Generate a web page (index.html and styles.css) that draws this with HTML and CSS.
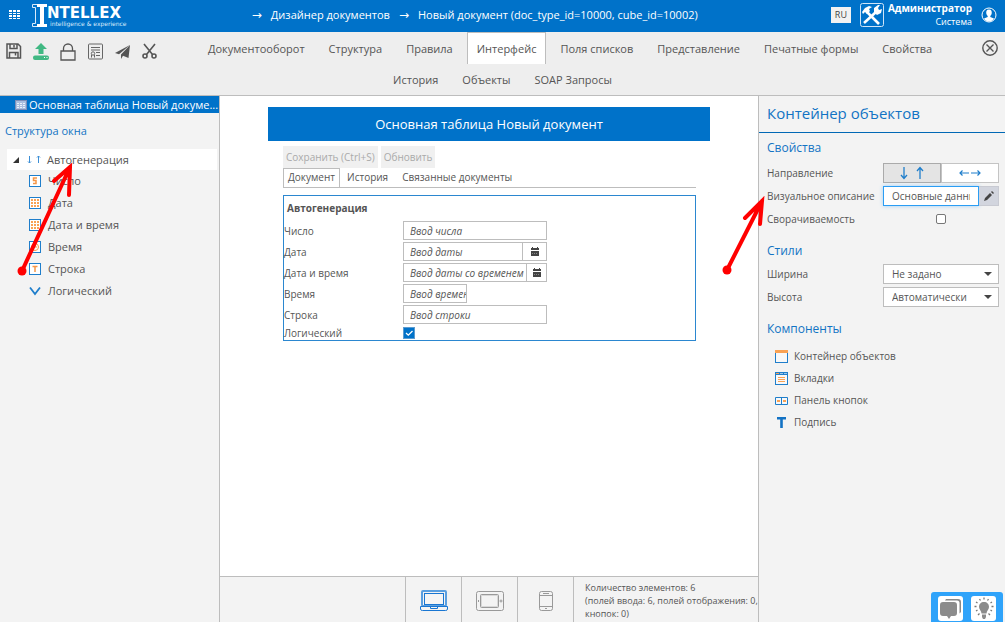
FILE: index.html
```html
<!DOCTYPE html>
<html lang="ru">
<head>
<meta charset="utf-8">
<title>Intellex — Дизайнер документов</title>
<link rel="stylesheet" href="styles.css">
</head>
<body>
<header class="topbar">
  <button class="icon-btn apps" aria-label="Меню">
    <svg width="12" height="10" viewBox="0 0 12 10" fill="#fff"><path d="M0 0h3v2H0zM4 0h3v2H4zM8 0h3v2H8zM0 3h3v1H0zM4 3h3v1H4zM8 3h3v1H8zM0 5h3v2H0zM4 5h3v2H4zM8 5h3v2H8zM0 8h3v1H0zM4 8h3v1H4zM8 8h3v1H8z"/></svg>
  </button>
  <div class="brand">
    <svg class="brand-mark" width="15" height="25" viewBox="0 0 15 25"><path d="M5 1h10v3h-3v17h3v3H5v-3h3V4H5z" fill="#fff"/><path d="M5 1.500H.5v3h3v16h-3v3H5" fill="none" stroke="#d9eafa"/></svg>
    <div class="brand-text"><span class="brand-name">NTELLEX</span><span class="brand-tag">intelligence &amp; experience</span></div>
  </div>
  <div class="crumbs"><span class="arrow">→</span><a href="#">Дизайнер документов</a><span class="arrow">→</span><a href="#">Новый документ (doc_type_id=10000, cube_id=10002)</a></div>
  <button class="lang">RU</button>
  <button class="icon-btn" aria-label="Настройки">
    <svg width="24" height="24" viewBox="0 0 24 24"><rect x=".5" y=".5" width="23" height="23" rx="2" fill="none" stroke="#cfe4f7"/><path d="M7 9l12 12" stroke="#fff" stroke-width="2.600"/><path d="M2 9l3-4 4-2 3 1-3 2 1 2-3 3-2-2-2 2z" fill="#fff"/><path d="M4 20L16 9" stroke="#fff" stroke-width="2.600"/><path d="M14 9V5l4-3h2l-2 3 1 2 3-1-1 4-4 2z" fill="#fff"/></svg>
  </button>
  <div class="user"><b>Администратор</b><span>Система</span></div>
  <button class="icon-btn" aria-label="Профиль">
    <svg width="16" height="16" viewBox="0 0 16 16"><circle cx="8" cy="8" r="7" fill="none" stroke="#fff"/><path d="M8 2.500c-2.500 0-3 2-2.700 4 .2 1.300.9 2 1.400 2.500v1L3 11.500c1 2 3 3 5 3s4-1 5-3L9.300 10V9c.5-.5 1.200-1.200 1.400-2.500.3-2-.2-4-2.700-4z" fill="#fff"/></svg>
  </button>
</header>

<nav class="nav">
  <div class="nav-row">
    <div class="tools">
      <button class="icon-btn" aria-label="Сохранить"><svg width="18" height="18" viewBox="0 0 18 18" fill="none" stroke="#555" stroke-width="1.500"><path d="M2 1h11l2.500 2.500V15H2zM5 1v4.500h7V1M4.500 15V9.500H13V15M9 2v2.500M10.500 10v2.500"/></svg></button>
      <button class="icon-btn" aria-label="Опубликовать"><svg width="18" height="18" viewBox="0 0 18 18"><path d="M9 0l6 6h-3.500v5h-5V6H3z" fill="#41b883"/><rect x="1" y="12.500" width="16" height="4.500" rx="2" fill="#41b883"/><path d="M12 14.500h1M14.500 14.500h1" stroke="#fff"/></svg></button>
      <button class="icon-btn" aria-label="Заблокировать"><svg width="18" height="18" viewBox="0 0 18 18" fill="none" stroke="#555" stroke-width="1.300"><path d="M2 8h14v9H2zM4.500 8V5.500a4.500 4.500 0 0 1 9 0V8"/></svg></button>
      <button class="icon-btn" aria-label="Сертификат"><svg width="18" height="18" viewBox="0 0 18 18" fill="none" stroke="#666"><rect x="2.500" y="1" width="14" height="15" rx="1"/><path d="M5 4.500h9M5 7h9M10 9.500h4M10 12.500h4"/><circle cx="7" cy="10.500" r="1.700"/><path d="M5.500 12v2.500M8.500 12v2.500"/></svg></button>
      <button class="icon-btn" aria-label="Отправить"><svg width="18" height="18" viewBox="0 0 18 18"><path d="M17 2L2 10l4 1.200z" fill="#555"/><path d="M17 2L8 11.500V16l2-3.300 5.500 2.300z" fill="#555"/></svg></button>
      <button class="icon-btn" aria-label="Вырезать"><svg width="18" height="18" viewBox="0 0 18 18" fill="none" stroke="#555" stroke-width="1.600"><path d="M4 1l8.500 10.500M15 1L6.500 11.500"/><circle cx="5" cy="13" r="2"/><circle cx="14" cy="13" r="2"/></svg></button>
    </div>
    <div class="tabs grow">
      <a class="tab" href="#">Документооборот</a><a class="tab" href="#">Структура</a><a class="tab" href="#">Правила</a><a class="tab active" href="#">Интерфейс</a><a class="tab" href="#">Поля списков</a><a class="tab" href="#">Представление</a><a class="tab" href="#">Печатные формы</a><a class="tab" href="#">Свойства</a>
    </div>
    <button class="icon-btn close" aria-label="Закрыть"><svg width="16" height="16" viewBox="0 0 16 16" fill="none" stroke="#555" stroke-width="1.400"><circle cx="8" cy="8" r="7.200"/><path d="M4.500 4.500l7 7M11.500 4.500l-7 7"/></svg></button>
  </div>
  <div class="tabs second">
    <a class="tab" href="#">История</a><a class="tab" href="#">Объекты</a><a class="tab" href="#">SOAP Запросы</a>
  </div>
</nav>

<div class="workspace">
  <aside class="left">
    <div class="doc-title">
      <svg width="12" height="10" viewBox="0 0 12 10"><rect x=".5" y=".5" width="11" height="9" fill="#a9bfe0" stroke="#7d8fb8"/><path d="M2 3.500h8M2 5.500h8M2 7.500h8" stroke="#eaf2fb" stroke-dasharray="2 1"/></svg>
      <span>Основная таблица Новый докуме...</span>
    </div>
    <h2 class="section">Структура окна</h2>
    <ul class="tree">
      <li class="root"><svg width="6" height="6"><path d="M6 0v6H0z" fill="#333"/></svg><svg width="18" height="10" viewBox="0 0 18 10" fill="none" stroke="#3b8ed6"><path d="M5.500 1v7M4 6.500L5.500 8 7 6.500M14.500 8V1M13 2.500L14.500 1 16 2.500"/></svg><span>Автогенерация</span></li>
      <li><svg width="12" height="12" viewBox="0 0 12 12"><rect x=".5" y=".5" width="11" height="11" fill="#fff" stroke="#1f7ecb"/><path d="M8 3H4.500v2.500h2.500V8.500H4" fill="none" stroke="#f79646" stroke-width="1.500"/></svg><span>Число</span></li>
      <li><svg width="12" height="12" viewBox="0 0 12 12"><rect x=".5" y=".5" width="11" height="11" fill="#fff" stroke="#1f7ecb"/><path d="M2 3h8M2 6h8M2 9h8" stroke="#f9a254" stroke-width="2" stroke-dasharray="2 1"/></svg><span>Дата</span></li>
      <li><svg width="12" height="12" viewBox="0 0 12 12"><rect x=".5" y=".5" width="11" height="11" fill="#fff" stroke="#1f7ecb"/><path d="M2 3h8M2 6h8M2 9h8" stroke="#f9a254" stroke-width="2" stroke-dasharray="2 1"/></svg><span>Дата и время</span></li>
      <li><svg width="12" height="12" viewBox="0 0 12 12"><rect x=".5" y=".5" width="11" height="11" fill="#fff" stroke="#1f7ecb"/><circle cx="6" cy="6" r="3.500" fill="none" stroke="#f79646"/><path d="M6 4v2h2" fill="none" stroke="#f79646"/></svg><span>Время</span></li>
      <li><svg width="12" height="12" viewBox="0 0 12 12"><rect x=".5" y=".5" width="11" height="11" fill="#fff" stroke="#1f7ecb"/><path d="M3.500 3.500h5M6 3.500V9" fill="none" stroke="#f79646" stroke-width="1.500"/></svg><span>Строка</span></li>
      <li><svg width="12" height="12" viewBox="0 0 12 12" fill="none" stroke="#1f7ecb" stroke-width="1.800"><path d="M1 2.500L6 9l5-6.500"/></svg><span>Логический</span></li>
    </ul>
    <svg class="pointer pointer-left" width="60" height="114" viewBox="0 0 60 114"><path d="M6 108L54 4M38 18L54 4L53 32" /><circle cx="6" cy="108" r="4.500"/></svg>
  </aside>

  <main class="center">
    <div class="canvas">
      <h1 class="banner">Основная таблица Новый документ</h1>
      <div class="form-body">
        <div class="actions"><button disabled>Сохранить (Ctrl+S)</button><button disabled>Обновить</button></div>
        <div class="subtabs"><a class="active" href="#">Документ</a><a href="#">История</a><a href="#">Связанные документы</a></div>
        <section class="group">
          <h3>Автогенерация</h3>
          <div class="field"><label for="num">Число</label><input class="box" id="num" placeholder="Ввод числа"></div>
          <div class="field"><label for="date">Дата</label><div class="box combo"><input id="date" placeholder="Ввод даты"><button class="cal wide" aria-label="Календарь"><svg width="10" height="10" viewBox="0 0 10 10"><path d="M1 1h1V0h1v1h4V0h1v1h1v2H1zM1 4h8v5H1z" fill="#444"/><path d="M2 6.500h6" stroke="#888" stroke-dasharray="1 1"/></svg></button></div></div>
          <div class="field"><label for="dt">Дата и время</label><div class="box combo"><input id="dt" placeholder="Ввод даты со временем"><button class="cal" aria-label="Календарь"><svg width="10" height="10" viewBox="0 0 10 10"><path d="M1 1h1V0h1v1h4V0h1v1h1v2H1zM1 4h8v5H1z" fill="#444"/><path d="M2 6.500h6" stroke="#888" stroke-dasharray="1 1"/></svg></button></div></div>
          <div class="field"><label for="time">Время</label><input class="box short" id="time" placeholder="Ввод времени"></div>
          <div class="field"><label for="str">Строка</label><input class="box" id="str" placeholder="Ввод строки"></div>
          <div class="field last"><label for="bool">Логический</label><span class="check-blue"><input type="checkbox" id="bool" checked><svg width="12" height="12" viewBox="0 0 12 12" fill="none" stroke="#fff" stroke-width="1.300"><path d="M3 6l2.300 2.200L9.500 4"/></svg></span></div>
        </section>
      </div>
    </div>
    <footer class="devices">
      <button class="device" aria-label="Ноутбук"><svg width="28" height="22" viewBox="0 0 28 22" fill="none" stroke="#1976d2"><rect x="2" y="1" width="24" height="15" rx="1" stroke-width="2" stroke="#5a9fe0"/><rect x="4.500" y="3.500" width="19" height="11" fill="#f5f5f5"/><path d="M.5 16.500h27V19q0 1.500-2 1.500h-23q-2 0-2-1.500zM10.500 17v1.500h7V17"/></svg></button>
      <button class="device" aria-label="Планшет"><svg width="28" height="20" viewBox="0 0 28 20" fill="none" stroke="#999"><rect x=".5" y=".5" width="27" height="19" rx="2"/><rect x="4.500" y="3.500" width="18" height="13" rx="1"/><rect x="5.500" y="4.500" width="16" height="11" stroke="#d8d8d8"/><circle cx="25" cy="10" r="1"/><path d="M2.500 9v2"/></svg></button>
      <button class="device" aria-label="Телефон"><svg width="14" height="20" viewBox="0 0 14 20" fill="none" stroke="#999"><rect x=".5" y=".5" width="13" height="19" rx="2"/><path d="M1 4.500h12M1 15.500h12M4 2.500h6M6 17.500h2"/></svg></button>
      <p class="stats">Количество элементов: 6<br>(полей ввода: 6, полей отображения: 0,<br>кнопок: 0)</p>
    </footer>
  </main>

  <aside class="right">
    <h2 class="panel-title">Контейнер объектов</h2>
    <div class="props">
      <h3 class="section">Свойства</h3>
      <div class="prop"><span>Направление</span><div class="control toggle"><button class="on" aria-label="Вертикально"><svg width="24" height="14" viewBox="0 0 24 14" fill="none" stroke="#1f7ecb" stroke-width="1.300"><path d="M4 1v11.500M1 9l3 3.500L7 9M20 13V1.500M17 5l3-3.500L23 5"/></svg></button><button aria-label="Горизонтально"><svg width="22" height="6" viewBox="0 0 22 6" fill="none" stroke="#1f7ecb" stroke-width="1.200"><path d="M10 3H1M3.500.5L1 3l2.500 2.500M12 3h9M18.500.5L21 3l-2.500 2.500"/></svg></button></div></div>
      <div class="prop"><label for="desc">Визуальное описание</label><div class="control desc"><input id="desc" value="Основные данные"><button aria-label="Изменить"><svg width="10" height="10" viewBox="0 0 10 10" fill="#444"><path d="M0 10l1-3 5-5 2 2-5 5zM7 1l1-1 2 2-1 1z"/></svg></button></div></div>
      <div class="prop"><label for="fold">Сворачиваемость</label><div class="control centered"><input class="check-plain" type="checkbox" id="fold"></div></div>
      <h3 class="section spaced">Стили</h3>
      <div class="prop"><label for="w">Ширина</label><div class="control select"><select id="w"><option>Не задано</option></select></div></div>
      <div class="prop"><label for="h">Высота</label><div class="control select"><select id="h"><option>Автоматически</option></select></div></div>
      <h3 class="section spaced">Компоненты</h3>
      <ul class="components">
        <li><svg width="13" height="13" viewBox="0 0 13 13"><rect x=".5" y=".5" width="12" height="12" fill="#f8f8f8" stroke="#1f7ecb"/><path d="M0 0h13v3H0z" fill="#f9a254"/></svg>Контейнер объектов</li>
        <li><svg width="13" height="13" viewBox="0 0 13 13"><rect x=".5" y=".5" width="12" height="12" fill="#f8f8f8" stroke="#1f7ecb"/><path d="M0 0h13v3H0z" fill="#1f7ecb"/><path d="M1 1h3v1H1zM3 5h7v1H3zM3 7h7v1H3zM3 9h7v1H3z" fill="#f9a254"/><path d="M5 1h3v1H5zM9 1h3v1H9z" fill="#9cc6ea"/></svg>Вкладки</li>
        <li><svg width="13" height="13" viewBox="0 0 13 13"><path d="M.5 3.500h12v7H.5zM6.500 3.500v7" fill="#f8f8f8" stroke="#1f7ecb"/><path d="M2 6h3v2H2zM8 6h3v2H8z" fill="#f9a254"/></svg>Панель кнопок</li>
        <li><svg width="13" height="13" viewBox="0 0 13 13"><path d="M2 1h9v2.500H7.800V12H5.200V3.500H2z" fill="#1372c4"/></svg>Подпись</li>
      </ul>
    </div>
    <svg class="pointer pointer-right" width="46" height="80" viewBox="0 0 46 80"><path d="M6 74L41 5M24 22L41 5L39 28"/><circle cx="6" cy="74" r="4.500"/></svg>
  </aside>
</div>

<div class="helper">
  <button aria-label="Чат"><svg width="25" height="25" viewBox="0 0 25 25"><path d="M8 3h12q3 0 3 3v10l-1.500 1.500V7q0-2.500-2.500-2.500H7z" fill="#888"/><path d="M5 6h11q3 0 3 3v8q0 3-3 3h-3l-2 3-2-3H5q-3 0-3-3V9q0-3 3-3z" fill="#8c8c8c"/></svg></button>
  <button aria-label="Подсказка"><svg width="25" height="25" viewBox="0 0 25 25"><path d="M13 6c-3 0-5 2-5 5 0 2.500 2.500 4 2.500 6.500h5C15.500 15 18 13.500 18 11c0-3-2-5-5-5zM11 18.500h4V21l-1 2h-2l-1-2z" fill="#8c8c8c"/><path d="M13 1.500v2M8.500 3l1 1.500M17.500 3l-1 1.500M5 6l1.500 1M21 6l-1.500 1M3.500 10.500h2M20.500 10.500h2M5 15l1.500-1M21 15l-1.500-1M7 19l1.500-1.500M19 19l-1.500-1.500" stroke="#777" stroke-width="1.300"/></svg></button>
</div>
</body>
</html>
```
FILE: styles.css
```css
* { box-sizing: border-box; }

body {
  margin: 0;
  min-height: 100vh;
  display: flex;
  flex-direction: column;
  font: 10px/14px "Open Sans", sans-serif;
  color: #555;
  background: #fff;
}

button, input, select { font: inherit; color: inherit; margin: 0; border-radius: 0; }
button { padding: 0; border: 0; background: none; }
a { color: inherit; text-decoration: none; }
h1, h2, h3, p, ul { margin: 0; padding: 0; font-weight: 400; }
ul { list-style: none; }
svg { display: block; flex: none; }
.icon-btn { flex: none; }

/* Top bar */
.topbar {
  display: flex;
  align-items: center;
  height: 32px;
  padding: 0 8px 2px 9px;
  background: #0072c9;
  color: #fff;
}
.brand { display: flex; align-items: center; margin-left: 11px; }
.brand-text { display: flex; flex-direction: column; padding-top: 3px; }
.brand-name { font: bold 15px/14px "DejaVu Sans", sans-serif; }
.brand-tag { margin-left: 3px; font: 6px/8px "DejaVu Sans", sans-serif; color: #d9eafa; }
.crumbs { flex: 1; display: flex; justify-content: center; gap: 9px; padding-right: 8px; font-size: 11px; line-height: 16px; white-space: nowrap; }
.arrow { font-family: "DejaVu Sans", sans-serif; font-size: 12px; }
.lang { width: 20px; height: 16px; background: #f2f2f2; color: #444; font-size: 9px; }
.topbar .lang + .icon-btn { margin-left: 9px; }
.user { display: flex; flex-direction: column; align-items: flex-end; margin: 0 9px 0 4px; font-size: 9px; line-height: 13px; }
.user b { font-size: 10px; }

/* Navigation */
.nav { background: #eee; border-bottom: 1px solid #bdbdbd; font-size: 11px; line-height: 16px; }
.nav-row { display: flex; }
.tools { display: flex; gap: 9px; padding: 8px 0 0 5px; }
.tabs { display: flex; justify-content: center; gap: 4px; }
.grow { flex: 1; }
.tab { padding: 8px 9px 7px; border: 1px solid transparent; border-bottom: 0; white-space: nowrap; }
.tab.active { background: #fff; border-color: #bdbdbd; }
.second .tab { padding-top: 7px; }
.close { align-self: flex-start; padding: 8px 7px 0 0; }

/* Workspace */
.workspace { flex: 1; display: grid; grid-template-columns: 220px 1fr 247px; }
.left, .right { position: relative; background: #f3f3f3; }
.left { border-right: 1px solid #bdbdbd; }
.right { border-left: 1px solid #bdbdbd; }
.section { color: #1273c4; font-size: 12px; line-height: 16px; }

.doc-title { display: flex; align-items: center; gap: 2px; height: 17px; padding-left: 15px; background: #0072c9; color: #fff; font-size: 11px; white-space: nowrap; }
.left .section { padding: 10px 5px; font-size: 11px; }
.tree { padding: 0 2px 0 7px; font-size: 11px; }
.tree li { display: flex; align-items: center; gap: 7px; height: 22px; padding-left: 22px; }
.tree .root { gap: 5px; height: 21px; padding-left: 6px; background: #fff; }

.pointer { position: absolute; fill: none; stroke: #f00; stroke-width: 4; stroke-linecap: round; pointer-events: none; }
.pointer circle { fill: #f00; stroke: none; }
.pointer-left { left: 16px; top: 67px; }
.pointer-right { left: -38px; top: 100px; }

/* Form preview */
.center { display: flex; flex-direction: column; min-width: 0; }
.canvas { flex: 1; padding: 11px 48px; }
.banner { background: #0072c9; color: #fff; font-size: 13px; line-height: 34px; text-align: center; }
.form-body { padding: 5px 14px 0 15px; }
.actions { display: flex; gap: 3px; }
.actions button { height: 22px; padding: 0 3px; background: #f0f0f0; color: #aaa; }
.subtabs { display: flex; border-bottom: 1px solid #bdbdbd; }
.subtabs a { padding: 2px 7px 3px; }
.subtabs .active { padding: 1px 4px 3px; border: 1px solid #bdbdbd; border-bottom: 0; }
.group { margin-top: 7px; border: 1px solid #2b87d0; }
.group h3 { padding: 5px 3px 6px; font-size: 10px; font-weight: 700; line-height: 14px; }
.field { display: flex; align-items: center; margin-bottom: 2px; }
.field label { flex: none; width: 119px; }
.field.last { margin-bottom: 0; }
.box { width: 144px; height: 19px; padding: 0 6px; border: 1px solid #bdbdbd; background: #fff; }
.box::placeholder, .combo input::placeholder { color: #555; font-style: italic; opacity: 1; }
.short { width: 64px; padding-right: 0; }
.combo { display: flex; padding: 0; }
.combo input { flex: 1; min-width: 0; padding: 0 0 0 6px; border: 0; background: none; }
.cal { display: flex; align-items: center; justify-content: center; width: 20px; border-left: 1px solid #bdbdbd; }
.wide { width: 24px; }
.check-blue { display: grid; width: 12px; height: 12px; }
.check-blue > * { grid-area: 1 / 1; pointer-events: none; }
.check-blue input { appearance: none; width: 12px; height: 12px; background: #fff; border: 1px solid #bdbdbd; pointer-events: auto; }
.check-blue input:checked { background: #0072c9; border-color: #5b9bd0; }
.check-blue input:not(:checked) + svg { visibility: hidden; }

.devices { display: flex; justify-content: flex-end; height: 46px; border-top: 1px solid #bdbdbd; background: #f3f3f3; }
.device { display: flex; align-items: center; justify-content: center; width: 56px; padding-top: 3px; border-left: 1px solid #bdbdbd; }
.stats { width: 185px; padding: 4px 0 0 11px; border-left: 1px solid #bdbdbd; font-size: 9px; line-height: 13px; white-space: nowrap; }

/* Properties */
.panel-title { padding: 7px 8px 8px; border-bottom: 1px solid #0068b5; color: #1273c4; font-size: 15px; line-height: 21px; }
.props { display: flex; flex-direction: column; gap: 3px; padding: 7px 6px 0 8px; }
.props .section { margin-bottom: 4px; }
.props .spaced { margin: 11px 0 2px; }
.prop { display: grid; grid-template-columns: 1fr 116px; align-items: center; min-height: 20px; }
.control { display: flex; height: 20px; }
.toggle button { flex: 1; display: flex; align-items: center; justify-content: center; border: 1px solid #c4c4c4; background: #fff; }
.toggle .on { background: #e4e4e4; border-color: #aaa; }
.desc input { flex: 1; min-width: 0; padding: 0 8px; border: 1px solid #2a9df4; background: #fff; box-shadow: 0 0 4px #9dcdf5; }
.desc button { display: flex; align-items: center; justify-content: center; width: 20px; background: #d2d5de; border: 1px solid #c8cad2; border-left: 0; }
.centered { align-items: center; justify-content: center; }
.check-plain { appearance: none; width: 10px; height: 10px; border: 1px solid #777; border-radius: 2px; background: #fff; }
.select { position: relative; }
.select select { appearance: none; width: 100%; padding: 0 8px; border: 1px solid #bdbdbd; background: #fff; }
.select::after { content: ""; position: absolute; right: 7px; top: 8px; border: solid transparent; border-width: 4px 4px 0; border-top-color: #444; }
.components { padding: 3px 8px; }
.components li { display: flex; align-items: center; gap: 6px; height: 22px; }

/* Help widget */
.helper { position: fixed; right: 2px; bottom: 0; display: flex; gap: 8px; padding: 4px 7px 1px; background: #2fa3fa; border-radius: 3px 3px 0 0; }
.helper button { background: #fff; border-radius: 3px; }
```
